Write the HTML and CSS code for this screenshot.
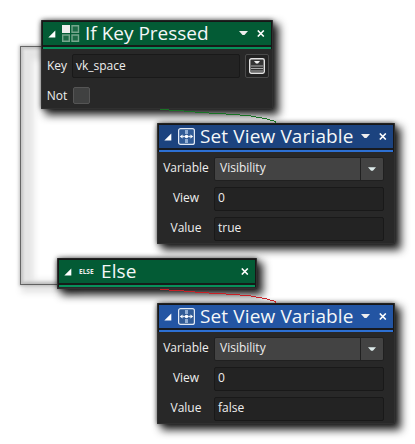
FILE: index.html
```
<!DOCTYPE html>
<html lang="en">
<head>
<meta charset="utf-8">
<title>Action blocks</title>
<link rel="stylesheet" href="styles.css">
</head>
<body>
<svg class="symbols" aria-hidden="true">
  <symbol id="fold" viewBox="0 0 8 8"><path d="M7.300 .5V7.500H.3z" fill="#fff"/></symbol>
  <symbol id="down" viewBox="0 0 9 5"><path d="M0 0h9L5.5 4h-2z" fill="currentColor"/></symbol>
  <symbol id="close" viewBox="0 0 8 7"><path d="M.8 .5l6 6M6.800 .5l-6 6" stroke="#fff" stroke-width="1.6"/></symbol>
  <symbol id="view" viewBox="0 0 17 17">
    <rect x=".6" y=".6" width="15.800" height="15.800" rx="2" fill="#315b96" stroke="#e2e9f4" stroke-width="1.2"/>
    <path d="M8.5 2v4M8.5 11v4" stroke="#91aed4" stroke-width="3"/>
    <path d="M3 8.5h11" stroke="#c9d8ed" stroke-width=".7"/>
    <path d="M1.800 8.5L4.600 6.500v4zM15.200 8.5l-2.800-2v4z" fill="#fff"/>
    <circle cx="8.5" cy="8.5" r="1.800" fill="#fff"/><path d="M5.800 7.700v1.600M11.200 7.700v1.600" stroke="#fff"/>
  </symbol>
</svg>
<main class="canvas">
  <div class="branch"></div>

  <section class="node node-if green">
    <header class="bar"><svg class="fold"><use href="#fold"/></svg>
      <svg class="icon keys" viewBox="0 0 18 17"><path d="M0 0h8v8H0z" fill="#eee"/><path d="M10 .7h6.5v6.6H10zM.7 10h6.6v6.3H.7zM10 10h6.5v6.3H10z" fill="#1d6b47" stroke="#76a68d" stroke-width="1.4"/></svg>
      <h2 class="title">If Key Pressed</h2>
      <svg class="down"><use href="#down"/></svg><svg class="close"><use href="#close"/></svg></header>
    <div class="body">
      <div class="row"><span class="label">Key</span><div class="field">vk_space</div>
        <div class="picker"><svg viewBox="0 0 16 16"><rect x=".7" y=".7" width="14.6" height="14.6" rx="1.7" fill="#333" stroke="#e2e2e2" stroke-width="1.4"/><path d="M2 8h12M2 10.500h12M2 13h12" stroke="#aaa" stroke-width="1.1"/><path d="M5 3h6L9 5.5H7z" fill="#eee"/></svg></div></div>
      <div class="row"><span class="label">Not</span><div class="check"></div></div>
    </div>
  </section>

  <section class="node node-else green">
    <header class="bar"><svg class="fold"><use href="#fold"/></svg><span class="tag">ELSE</span>
      <h2 class="title">Else</h2><svg class="close"><use href="#close"/></svg></header>
  </section>

  <section class="node node-true blue">
    <header class="bar"><svg class="fold"><use href="#fold"/></svg><svg class="icon"><use href="#view"/></svg>
      <h2 class="title">Set View Variable</h2><svg class="down"><use href="#down"/></svg><svg class="close"><use href="#close"/></svg></header>
    <div class="body">
      <div class="row"><span class="label">Variable</span><div class="select"><span class="choice">Visibility</span><span class="arrow"><svg class="down"><use href="#down"/></svg></span></div></div>
      <div class="row"><span class="label">View</span><div class="field">0</div></div>
      <div class="row"><span class="label">Value</span><div class="field">true</div></div>
    </div>
  </section>

  <section class="node node-false blue bright">
    <header class="bar"><svg class="fold"><use href="#fold"/></svg><svg class="icon"><use href="#view"/></svg>
      <h2 class="title">Set View Variable</h2><svg class="down"><use href="#down"/></svg><svg class="close"><use href="#close"/></svg></header>
    <div class="body">
      <div class="row"><span class="label">Variable</span><div class="select"><span class="choice">Visibility</span><span class="arrow"><svg class="down"><use href="#down"/></svg></span></div></div>
      <div class="row"><span class="label">View</span><div class="field">0</div></div>
      <div class="row"><span class="label">Value</span><div class="field">false</div></div>
    </div>
  </section>

  <svg class="links" viewBox="0 0 415 444">
    <path d="M160 109.500L178 110.500L200 112.500L234 114.500L250 115.900L265 118.500L275.500 121.500V123" stroke="#197225"/>
    <path d="M160 289.500L178 290.500L200 292.500L234 294.500L250 295.900L265 298.500L275.500 301.500V303" stroke="#c82026"/>
  </svg>
</main>
</body>
</html>
```
FILE: styles.css
```
* { box-sizing: border-box; }
body { margin: 0; background: #fff; }
svg { display: block; flex: none; }
.symbols { position: absolute; width: 0; height: 0; }
.canvas {
  position: relative; width: 415px; height: 444px; overflow: hidden;
  background: #fff; color: #eee;
  font: 12px/24px "Open Sans", "Noto Sans", sans-serif;
}
.branch {
  position: absolute; left: 20px; top: 46px; width: 60px; height: 239px;
  border: 1px solid #808080; border-right: 0;
}
.branch::before {
  content: ""; position: absolute; inset: 0 0 -9px 0;
  border: 13px solid rgba(0,0,0,.1); border-right: 0; filter: blur(3px);
}
.branch::after {
  content: ""; position: absolute; inset: -2px 0 -2px -2px;
  border: 4px solid rgba(0,0,0,.2); border-right: 0; filter: blur(1.5px);
}
.links { position: absolute; inset: 0; width: 415px; height: 444px; fill: none; stroke-width: 1; shape-rendering: crispEdges; }
.node {
  position: absolute; background: #282828;
  border: 1px solid #303030; border-top-color: #222; border-radius: 1px;
  box-shadow: 0 0 5px rgba(0,0,0,.6), 5px 5px 9px 1px rgba(0,0,0,.85);
}
.node-if { left: 41px; top: 20px; width: 232px; height: 89px; }
.node-else { left: 57px; top: 258px; width: 200px; height: 31px; }
.node-true { left: 157px; top: 123px; width: 238px; height: 121px; }
.node-false { left: 157px; top: 303px; width: 238px; height: 121px; }
.bar {
  display: flex; align-items: center; height: 28px; padding: 0 3px 4px 5px;
  border: 1px solid #171717; border-bottom-width: 0;
}
.green .bar { background: linear-gradient(#035b35 0 23px, #171b19 23px 25px, #06905a 25px); }
.blue .bar { background: linear-gradient(#1c437f 0 23px, #171a20 23px 25px, #2d70d3 25px); }
.bright .bar { background: linear-gradient(#2355a3 0 23px, #171a20 23px 25px, #2d70d3 25px); }
.fold { width: 8px; height: 8px; }
.icon { width: 17px; height: 17px; margin-left: 6px; }
.keys { width: 18px; margin-left: 6px; }
.title { flex: 1; margin: -2px 0 0 5px; font: 400 19px/24px "Open Sans", "Noto Sans", sans-serif; letter-spacing: .13px; white-space: nowrap; color: #f4f7f8; }
.keys + .title { letter-spacing: 0; }
.tag { margin-left: 7px; width: 17px; font: 700 6.500px/10px "Open Sans", sans-serif; }
.down { width: 9px; height: 5px; }
.close { width: 8px; height: 7px; margin: 0 3px 0 9px; }
.body { display: grid; row-gap: 6px; padding: 5px 10px 0 0; }
.row { display: flex; height: 24px; }
.label { flex: none; width: 56px; line-height: 22px; text-align: center; }
.field { flex: 1; height: 24px; padding-left: 3px; border: 1px solid #191919; border-radius: 2px; background: #232323; line-height: 20px; }
.select { flex: 1; display: flex; height: 24px; border: 1px solid #202020; border-radius: 2px; background: #434343; line-height: 20px; }
.choice { flex: 1; padding-left: 5px; }
.arrow { display: flex; align-items: center; justify-content: center; width: 23px; border-left: 1px solid #202020; color: #dceaea; }
.arrow .down { width: 8px; }
.node-if .body { padding-right: 3px; }
.node-if .label { width: 30px; line-height: 24px; }
.node-if .field { line-height: 22px; }
.picker { display: flex; align-items: center; justify-content: center; width: 24px; height: 24px; margin-left: 5px; border: 1px solid #4a4a4a; border-radius: 2px; background: #222; }
.picker svg { width: 16px; height: 16px; }
.check { width: 17px; height: 17px; margin: 3px 0 0 1px; border: 1px solid #555; border-radius: 2px; background: #404141; }
```
